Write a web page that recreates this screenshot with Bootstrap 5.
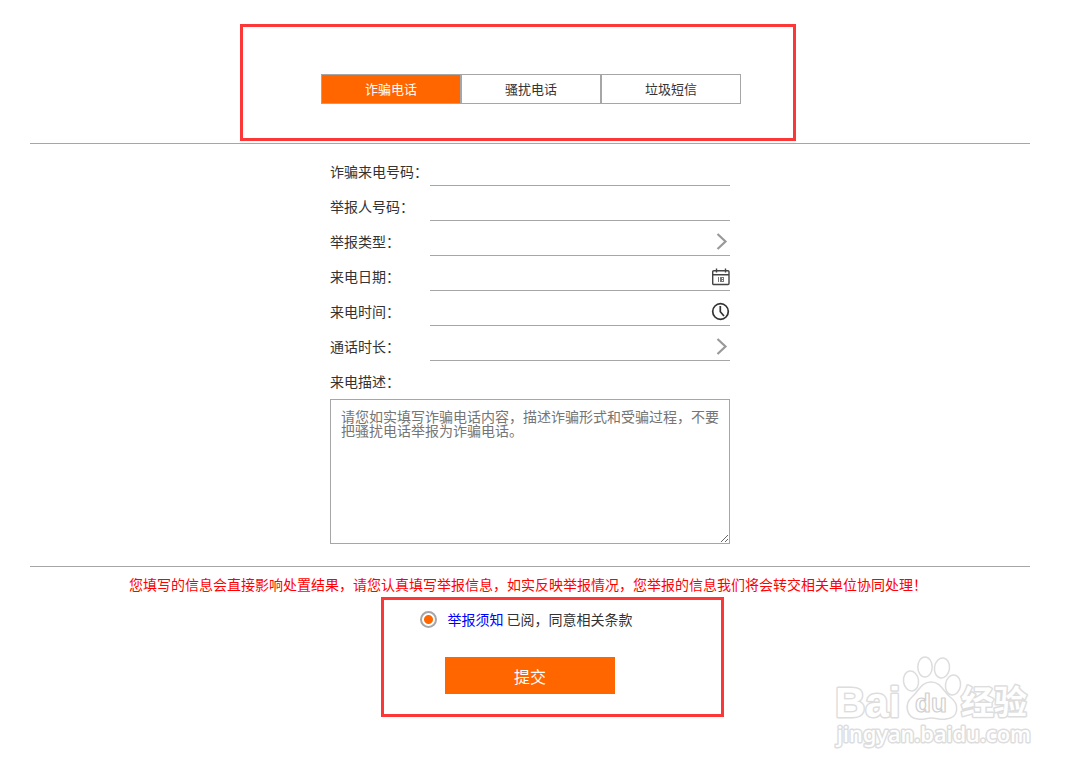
<!DOCTYPE html>
<html lang="zh-CN">
<head>
<meta charset="utf-8">
<meta name="viewport" content="width=device-width, initial-scale=1">
<title>举报</title>
<link href="https://cdn.jsdelivr.net/npm/bootstrap@5.3.0/dist/css/bootstrap.min.css" rel="stylesheet">
<style>
  body { font-family: "Noto Sans CJK SC", sans-serif; font-size: 14px; line-height: 20px; color: #333; background: #fff; }
  .report { max-width: 1060px; padding: 0 30px; }
  .top-area { padding: 74px 0 39px; border-bottom: 1px solid #a6a6a6; }
  .kinds-wrap { padding-left: 2px; }
  .kinds { width: 420px; }
  .kinds .btn { font-size: 13px; line-height: 20px; height: 30px; padding: 4px 0; border: 1px solid #a6a6a6; border-radius: 0; color: #333; background: #fff; }
  .kinds .btn.active { background: #f60; color: #fff; border-color: #a6a6a6; }
  .fields { width: 400px; max-width: 100%; padding: 7px 0 22px; }
  .field-row { height: 35px; }
  .field-row label { width: 100px; padding-top: 10px; }
  .line-box { border-bottom: 1px solid #a6a6a6; }
  .line-box input, .line-box select { font-size: 14px; height: 34px; padding: 12px 0 0; border: 0; border-radius: 0; background: transparent; box-shadow: none; color: #333; }
  .line-box svg { right: 0; top: 10px; pointer-events: none; }
  .desc-label { padding: 10px 0 8px; }
  .desc { height: 145px; padding: 9px 10px; font-size: 14px; line-height: 14px; border: 1px solid #a6a6a6; border-radius: 0; resize: both; }
  .desc::placeholder { color: #757575; }
  .end-area { border-top: 1px solid #a6a6a6; padding: 7px 0 79px; }
  .notice { color: #f00; padding-right: 4px; }
  .agree { margin: 15px 0 28px; gap: 10px; padding-right: 7px; }
  .agree a { color: #00f; text-decoration: none; }
  .agree input { appearance: none; width: 17px; height: 17px; margin: 0; border: 2px solid #a6a6a6; border-radius: 50%; }
  .agree input:checked { background: radial-gradient(circle, #f60 4px, #fff 5px); }
  .submit { width: 170px; height: 37px; padding: 0; font-size: 16px; border: 0; border-radius: 0; color: #fff; background: #f60; }
  .submit:hover { background: #e65c00; color: #fff; }
  .frame { border: 3px solid #fc3737; pointer-events: none; }
  .frame-kinds { left: 210px; top: 24px; width: 556px; height: 117px; }
  .frame-submit { left: 351px; top: 30px; width: 343px; height: 120px; }
  .watermark { right: -6px; top: 84px; pointer-events: none; }
</style>
</head>
<body>
<main class="report">
  <section class="top-area position-relative">
    <div class="kinds-wrap">
      <div class="kinds d-flex mx-auto" role="group" aria-label="举报类别">
        <button type="button" class="btn active w-100">诈骗电话</button>
        <button type="button" class="btn w-100">骚扰电话</button>
        <button type="button" class="btn w-100">垃圾短信</button>
      </div>
    </div>
    <div class="frame frame-kinds position-absolute"></div>
  </section>

  <form>
    <div class="fields mx-auto">
      <div class="field-row d-flex">
        <label for="caller">诈骗来电号码：</label>
        <div class="line-box flex-grow-1"><input id="caller" type="text" class="form-control"></div>
      </div>
      <div class="field-row d-flex">
        <label for="reporter">举报人号码：</label>
        <div class="line-box flex-grow-1"><input id="reporter" type="text" class="form-control"></div>
      </div>
      <div class="field-row d-flex">
        <label for="kind">举报类型：</label>
        <div class="line-box flex-grow-1 position-relative">
          <select id="kind" class="form-control"><option></option></select>
          <svg class="position-absolute" width="20" height="20" fill="none" stroke="#999" stroke-width="2.200"><path d="M7.500 3L15.500 10.500L7.500 18"/></svg>
        </div>
      </div>
      <div class="field-row d-flex">
        <label for="date">来电日期：</label>
        <div class="line-box flex-grow-1 position-relative">
          <input id="date" type="text" class="form-control">
          <svg class="position-absolute" width="20" height="20" fill="none" stroke="#444" stroke-width="1.400"><rect x="2.700" y="4.700" width="16.300" height="13.800" rx="1"/><path d="M2.700 8.700H19M6.500 2.500V6.500M15.500 2.500V6.500"/><path d="M8.500 11v5M10.500 11v5M11.500 11v5M13.500 11v5M10 11.500h4M10 13.500h4M10 15.500h4" stroke="#777" stroke-width="1"/></svg>
        </div>
      </div>
      <div class="field-row d-flex">
        <label for="time">来电时间：</label>
        <div class="line-box flex-grow-1 position-relative">
          <input id="time" type="text" class="form-control">
          <svg class="position-absolute" width="20" height="20" fill="none" stroke="#333" stroke-width="1.700"><circle cx="10.500" cy="10.500" r="7.800"/><path d="M10.300 5V10.800L14 15"/></svg>
        </div>
      </div>
      <div class="field-row d-flex">
        <label for="length">通话时长：</label>
        <div class="line-box flex-grow-1 position-relative">
          <select id="length" class="form-control"><option></option></select>
          <svg class="position-absolute" width="20" height="20" fill="none" stroke="#999" stroke-width="2.200"><path d="M7.500 3L15.500 10.500L7.500 18"/></svg>
        </div>
      </div>
      <label class="desc-label d-block" for="desc">来电描述：</label>
      <textarea id="desc" class="desc form-control" placeholder="请您如实填写诈骗电话内容，描述诈骗形式和受骗过程，不要把骚扰电话举报为诈骗电话。"></textarea>
    </div>

    <section class="end-area position-relative text-center">
      <div class="notice">您填写的信息会直接影响处置结果，请您认真填写举报信息，如实反映举报情况，您举报的信息我们将会转交相关单位协同处理！</div>
      <div class="agree d-flex justify-content-center align-items-center">
        <input id="agree" type="radio" checked>
        <label for="agree"><a href="#">举报须知</a> 已阅，同意相关条款</label>
      </div>
      <button type="button" class="submit btn">提交</button>
      <div class="frame frame-submit position-absolute"></div>
      <svg class="watermark position-absolute" width="204" height="104" fill="#fff" stroke="#ddd" stroke-width="1.500" stroke-linejoin="round">
        <g font-weight="700" paint-order="stroke" stroke-width="3">
          <text x="3" y="66" font-size="42" font-family="Liberation Sans, sans-serif">Bai</text>
          <text x="129" y="63" font-size="33" font-family="Noto Sans CJK SC, sans-serif">经验</text>
          <text x="5" y="91" font-size="22" font-family="Noto Sans, sans-serif" font-weight="500">jingyan.baidu.com</text>
        </g>
        <ellipse cx="79" cy="30" rx="7.500" ry="10" transform="rotate(-8 79 30)"/>
        <ellipse cx="93" cy="16" rx="7.200" ry="10"/>
        <ellipse cx="110" cy="17" rx="7.500" ry="10" transform="rotate(8 110 17)"/>
        <ellipse cx="121" cy="34" rx="7.500" ry="10" transform="rotate(8 121 34)"/>
        <path d="M99 31C89 31 87 40 80 46C72 53 74 67 86 68C92 69 94 67 99 67C105 67 108 69 114 68C127 67 128 53 118 46C111 40 109 31 99 31Z"/>
        <text x="83" y="61" font-family="Liberation Sans, sans-serif" font-weight="700" font-size="26" stroke-width="1.200" stroke="#d0d0d0">du</text>
      </svg>
    </section>
  </form>
</main>
<script src="https://cdn.jsdelivr.net/npm/bootstrap@5.3.0/dist/js/bootstrap.bundle.min.js"></script>
</body>
</html>
